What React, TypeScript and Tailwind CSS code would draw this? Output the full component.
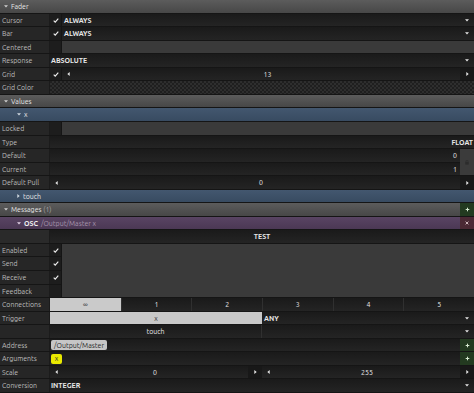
import React from 'react';

const HEIGHTS = [14, 13, 14, 13, 14, 13, 14, 13, 14, 14, 13, 14, 13, 14, 13, 14, 13, 14, 13, 14, 14, 13, 14, 13, 14, 13, 14, 13, 14];
const hc = (i: number) => (HEIGHTS[i] === 14 ? 'h-[14px]' : 'h-[13px]');

const DARK = 'bg-gradient-to-b from-[#1a1a1a] to-[#242424]';

function Down({ c = '#e6e6e6' }: { c?: string }) {
  return (
    <svg width="4" height="3" viewBox="0 0 4 3">
      <path d="M0 0.3H4L2 2.6Z" fill={c} />
    </svg>
  );
}
function RightArrow({ c = '#e6e6e6' }: { c?: string }) {
  return (
    <svg width="3" height="4" viewBox="0 0 3 4">
      <path d="M0.3 0L2.7 2L0.3 4Z" fill={c} />
    </svg>
  );
}
function LeftArrow({ c = '#e6e6e6' }: { c?: string }) {
  return (
    <svg width="3" height="4" viewBox="0 0 3 4">
      <path d="M2.7 0L0.3 2L2.7 4Z" fill={c} />
    </svg>
  );
}
function Check() {
  return (
    <svg width="6" height="5" viewBox="0 0 6 5">
      <path d="M0.7 2.7L2.2 4.2L5.3 0.6" fill="none" stroke="#f0f0f0" strokeWidth="1.1" />
    </svg>
  );
}
function Plus() {
  return (
    <svg width="5" height="5" viewBox="0 0 5 5">
      <path d="M2.5 0.7V4.3M0.7 2.5H4.3" stroke="#d8ecd2" strokeWidth="1" />
    </svg>
  );
}
function Cross() {
  return (
    <svg width="4" height="4" viewBox="0 0 4 4">
      <path d="M0.6 0.6L3.4 3.4M3.4 0.6L0.6 3.4" stroke="#e0c8cc" strokeWidth="0.9" />
    </svg>
  );
}
function Lock() {
  return (
    <svg width="4" height="5" viewBox="0 0 4 5">
      <path d="M1 2V1.2A1 1 0 0 1 3 1.2V2" fill="none" stroke="#2c2c2c" strokeWidth="0.6" />
      <rect x="0.3" y="2" width="3.4" height="2.6" fill="#2c2c2c" />
    </svg>
  );
}

function Row({ i, children, className = '' }: { i: number; children?: React.ReactNode; className?: string }) {
  return <div className={`flex shrink-0 border-b border-[#151515] ${hc(i)} ${className}`}>{children}</div>;
}

function Label({ text }: { text?: string }) {
  return (
    <div className="w-[50px] shrink-0 flex items-center pl-[2px] bg-[#262626] border-r border-[#1b1b1b] text-[#bebebe]">
      {text}
    </div>
  );
}

function CheckCell({ on }: { on?: boolean }) {
  return (
    <div className="w-[12px] shrink-0 flex items-center justify-center bg-[#1d1d1d] border-r border-[#151515]">
      {on && <Check />}
    </div>
  );
}

function Dropdown({ text, pl = 'pl-[2px]' }: { text?: string; pl?: string }) {
  return (
    <div className={`flex-1 flex items-center justify-between pr-[5px] ${DARK}`}>
      <span className={`${pl} font-semibold text-[#e8e8e8]`}>{text}</span>
      <Down />
    </div>
  );
}

function Header({ i, label, extra, plus }: { i: number; label: string; extra?: string; plus?: boolean }) {
  return (
    <Row i={i} className="bg-gradient-to-b from-[#5c5c5c] to-[#474747]">
      <div className="flex-1 flex items-center pl-[4px] gap-[3px] text-[#e6e6e6]">
        <Down c="#cfcfcf" />
        <span>
          {label}
          {extra && <span className="text-[#a8a8a8]"> {extra}</span>}
        </span>
      </div>
      {plus && (
        <div className="w-[14px] shrink-0 flex items-center justify-center bg-[#233a20]">
          <Plus />
        </div>
      )}
    </Row>
  );
}

function Slider({ value, leftBox = 'w-[12px]' }: { value: string; leftBox?: string }) {
  return (
    <div className={`flex-1 flex items-stretch ${DARK}`}>
      <div className={`${leftBox} shrink-0 flex items-center justify-center`}>
        <LeftArrow />
      </div>
      <div className="flex-1 flex items-center justify-center text-[#e8e8e8]">{value}</div>
      <div className="w-[14px] shrink-0 flex items-center justify-center bg-[#181818]">
        <RightArrow />
      </div>
    </div>
  );
}

export default function App() {
  return (
    <div className="w-[474px] h-[393px] overflow-hidden bg-[#161616] font-['Ubuntu','Noto_Sans',sans-serif] text-[7px] leading-none text-[#d0d0d0] flex flex-col">
      <Header i={0} label="Fader" />
      <Row i={1}>
        <Label text="Cursor" />
        <CheckCell on />
        <Dropdown text="ALWAYS" />
      </Row>
      <Row i={2}>
        <Label text="Bar" />
        <CheckCell on />
        <Dropdown text="ALWAYS" />
      </Row>
      <Row i={3}>
        <Label text="Centered" />
        <CheckCell />
        <div className="flex-1 bg-[#3a3a3a]" />
      </Row>
      <Row i={4}>
        <Label text="Response" />
        <Dropdown text="ABSOLUTE" pl="pl-[1px]" />
      </Row>
      <Row i={5}>
        <Label text="Grid" />
        <CheckCell on />
        <Slider value="13" leftBox="w-[13px]" />
      </Row>
      <Row i={6}>
        <Label text="Grid Color" />
        <div className="flex-1 bg-[image:repeating-conic-gradient(#2e2e2e_0%_25%,#1f1f1f_0%_50%)] bg-[length:4px_4px]" />
      </Row>
      <Header i={7} label="Values" />
      <Row i={8} className="bg-gradient-to-b from-[#43576f] to-[#384b61]">
        <div className="flex items-center pl-[17px] gap-[3px] text-[#e6e6e6]">
          <Down c="#d0d8e0" />
          <span>x</span>
        </div>
      </Row>
      <Row i={9}>
        <Label text="Locked" />
        <CheckCell />
        <div className="flex-1 bg-[#3a3a3a]" />
      </Row>
      <Row i={10}>
        <Label text="Type" />
        <div className={`flex-1 flex items-center justify-end pr-[1px] font-semibold text-[#e8e8e8] ${DARK}`}>FLOAT</div>
      </Row>
      <div className="flex shrink-0">
        <div className="flex-1 flex flex-col">
          <Row i={11}>
            <Label text="Default" />
            <div className={`flex-1 flex items-center justify-end pr-[3px] text-[#e8e8e8] ${DARK}`}>0</div>
          </Row>
          <Row i={12}>
            <Label text="Current" />
            <div className={`flex-1 flex items-center justify-end pr-[3px] text-[#e8e8e8] ${DARK}`}>1</div>
          </Row>
        </div>
        <div className="w-[14px] shrink-0 flex items-center justify-center bg-[#3b3b3b] border-b border-[#151515]">
          <Lock />
        </div>
      </div>
      <Row i={13}>
        <Label text="Default Pull" />
        <Slider value="0" />
      </Row>
      <Row i={14} className="bg-gradient-to-b from-[#43576f] to-[#384b61]">
        <div className="flex items-center pl-[17px] gap-[3px] text-[#e6e6e6]">
          <RightArrow c="#d0d8e0" />
          <span>touch</span>
        </div>
      </Row>
      <Header i={15} label="Messages" extra="(1)" plus />
      <Row i={16} className="bg-gradient-to-b from-[#594463] to-[#4b3854]">
        <div className="flex-1 flex items-center pl-[17px] gap-[3px]">
          <Down c="#e0d0e4" />
          <span className="font-bold text-[#f0f0f0]">OSC</span>
          <span className="text-[#a794ad]">/Output/Master x</span>
        </div>
        <div className="w-[14px] shrink-0 flex items-center justify-center bg-[#4b2934]">
          <Cross />
        </div>
      </Row>
      <Row i={17}>
        <div className="w-[50px] shrink-0 bg-[#2a2a2a] border-r border-[#1b1b1b]" />
        <div className={`flex-1 flex items-center justify-center font-semibold text-[#e8e8e8] ${DARK}`}>TEST</div>
      </Row>
      <div className="flex shrink-0">
        <div className="w-[62px] shrink-0 flex flex-col">
          <Row i={18}>
            <Label text="Enabled" />
            <CheckCell on />
          </Row>
          <Row i={19}>
            <Label text="Send" />
            <CheckCell on />
          </Row>
          <Row i={20}>
            <Label text="Receive" />
            <CheckCell on />
          </Row>
          <Row i={21}>
            <Label text="Feedback" />
            <CheckCell />
          </Row>
        </div>
        <div className="flex-1 bg-[#3a3a3a] border-b border-[#151515]" />
      </div>
      <Row i={22}>
        <Label text="Connections" />
        <div className="flex-1 grid grid-cols-6">
          <div className="flex items-center justify-center bg-[#cacaca] text-[#3a3a3a] text-[8px]">∞</div>
          {['1', '2', '3', '4', '5'].map((n) => (
            <div key={n} className={`flex items-center justify-center border-l border-[#303030] text-[#e8e8e8] ${DARK}`}>
              {n}
            </div>
          ))}
        </div>
      </Row>
      <Row i={23}>
        <Label text="Trigger" />
        <div className="flex-1 grid grid-cols-2">
          <div className="flex items-center justify-center bg-[#c8c8c8] text-[#333]">x</div>
          <div className={`flex items-center justify-between pr-[5px] ${DARK}`}>
            <span className="pl-[2px] font-semibold text-[#e8e8e8]">ANY</span>
            <Down />
          </div>
        </div>
      </Row>
      <Row i={24}>
        <Label />
        <div className="flex-1 grid grid-cols-2">
          <div className={`flex items-center justify-center border-r border-[#303030] text-[#e8e8e8] ${DARK}`}>touch</div>
          <div className={`flex items-center justify-end pr-[5px] ${DARK}`}>
            <Down />
          </div>
        </div>
      </Row>
      <Row i={25}>
        <Label text="Address" />
        <div className={`flex-1 flex items-center pl-[1px] ${DARK}`}>
          <span className="h-[10px] flex items-center px-[3px] rounded-[2px] bg-[#c6c6c6] text-[#262626]">/Output/Master</span>
        </div>
        <div className="w-[14px] shrink-0 flex items-center justify-center bg-[#233a20]">
          <Plus />
        </div>
      </Row>
      <Row i={26}>
        <Label text="Arguments" />
        <div className={`flex-1 flex items-center pl-[1px] ${DARK}`}>
          <span className="w-[11px] h-[10px] flex items-center justify-center rounded-[2px] bg-[#e8e800] text-[#333]">x</span>
        </div>
        <div className="w-[14px] shrink-0 flex items-center justify-center bg-[#233a20]">
          <Plus />
        </div>
      </Row>
      <Row i={27}>
        <Label text="Scale" />
        <div className="flex-1 grid grid-cols-2">
          <Slider value="0" />
          <Slider value="255" />
        </div>
      </Row>
      <Row i={28}>
        <Label text="Conversion" />
        <Dropdown text="INTEGER" pl="pl-[1px]" />
      </Row>
    </div>
  );
}
